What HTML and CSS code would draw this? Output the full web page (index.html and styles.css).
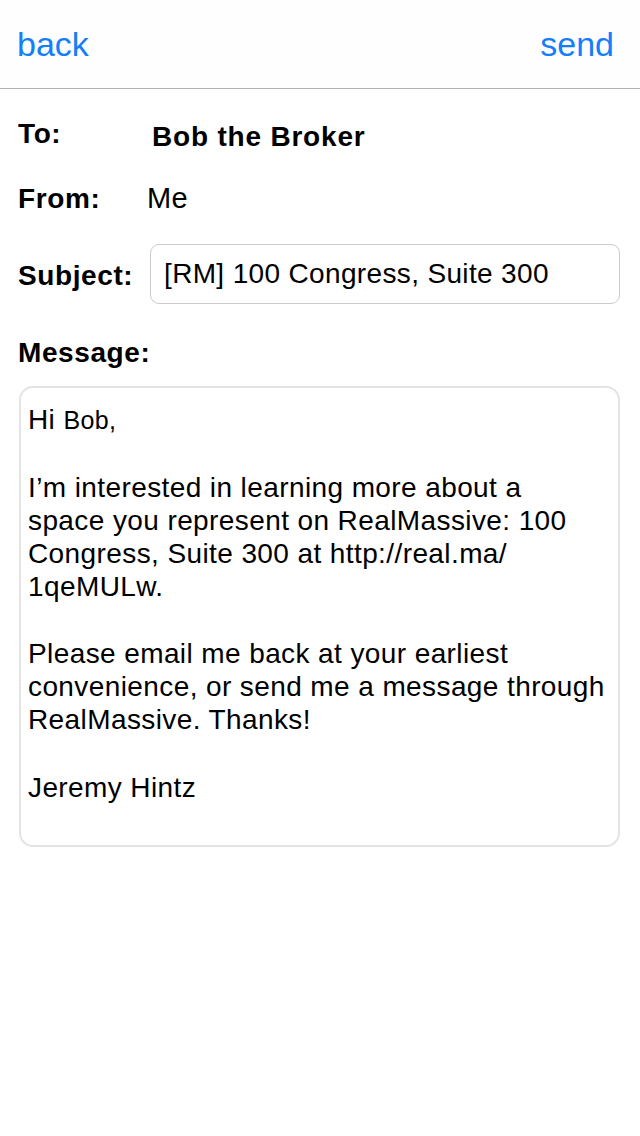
FILE: index.html
```html
<!DOCTYPE html>
<html lang="en">
<head>
<meta charset="utf-8">
<title>Message</title>
<link rel="stylesheet" href="styles.css">
</head>
<body>
<header class="navbar">
  <span class="nav-btn">back</span>
  <span class="nav-title"></span>
  <span class="nav-btn">send</span>
</header>
<main class="form">
  <div class="row row-to">
    <span class="label">To:</span>
    <span class="value value-to">Bob the Broker</span>
  </div>
  <div class="row row-from">
    <span class="label">From:</span>
    <span class="value value-from">Me</span>
  </div>
  <div class="row row-subject">
    <span class="label label-subject">Subject:</span>
    <div class="field">[RM] 100 Congress, Suite 300</div>
  </div>
  <div class="row row-message">
    <span class="label">Message:</span>
  </div>
  <div class="message-box">
    <div class="line">Hi <span class="small">Bob,</span></div>
    <div class="line blank"></div>
    <div class="line">I’m interested in learning more about a</div>
    <div class="line">space you represent on RealMassive: 100</div>
    <div class="line">Congress, Suite 300 at http://real.ma/</div>
    <div class="line">1qeMULw.</div>
    <div class="line blank"></div>
    <div class="line">Please email me back at your earliest</div>
    <div class="line">convenience, or send me a message through</div>
    <div class="line">RealMassive. Thanks!</div>
    <div class="line blank"></div>
    <div class="line">Jeremy Hintz</div>
  </div>
</main>
</body>
</html>
```

FILE: styles.css
```css
html, body {
  margin: 0;
  padding: 0;
  background: #ffffff;
}
body {
  width: 640px;
  height: 1136px;
  font-family: "Liberation Sans", Arial, sans-serif;
  color: #000;
}
.navbar {
  height: 89px;
  box-sizing: border-box;
  border-bottom: 1px solid #b3b3b3;
  background: #fefefe;
  display: flex;
  align-items: center;
  justify-content: space-between;
  padding: 0 26px 0 17px;
}
.nav-btn {
  color: #147efb;
  font-size: 34px;
  line-height: 40px;
}
.form {
  display: flex;
  flex-direction: column;
  padding: 29px 20px 0 18px;
}
.row {
  display: flex;
  align-items: flex-start;
}
.label {
  width: 132px;
  flex: none;
  font-weight: bold;
  font-size: 28px;
  line-height: 32px;
  letter-spacing: 0.6px;
}
.value {
  font-size: 28px;
  line-height: 32px;
}
.value-to {
  font-weight: bold;
  letter-spacing: 0.8px;
  padding-top: 3px;
  margin-left: 2px;
}
.value-from {
  margin-left: -3px;
  margin-top: -1px;
  font-size: 29px;
  letter-spacing: 0.3px;
}
.row-from {
  margin-top: 30px;
}
.row-subject {
  margin-top: 29px;
}
.label-subject {
  margin-top: 16px;
}
.field {
  flex: 1;
  height: 60px;
  box-sizing: border-box;
  border: 1px solid #cbcbcb;
  border-radius: 9px;
  display: flex;
  align-items: center;
  padding: 0 13px;
  font-size: 28px;
  line-height: 32px;
  letter-spacing: 0.35px;
}
.row-message {
  margin-top: 33px;
}
.message-box {
  margin-top: 17px;
  margin-left: 1px;
  height: 461px;
  box-sizing: border-box;
  border: 2px solid #e4e4e4;
  border-radius: 14px;
  padding: 15px 7px 0 7px;
  font-size: 28px;
  line-height: 33px;
  letter-spacing: 0.4px;
}
.line {
  height: 33px;
  white-space: nowrap;
}
.line.blank {
  height: 34.5px;
}
.small {
  font-size: 25px;
}
```
